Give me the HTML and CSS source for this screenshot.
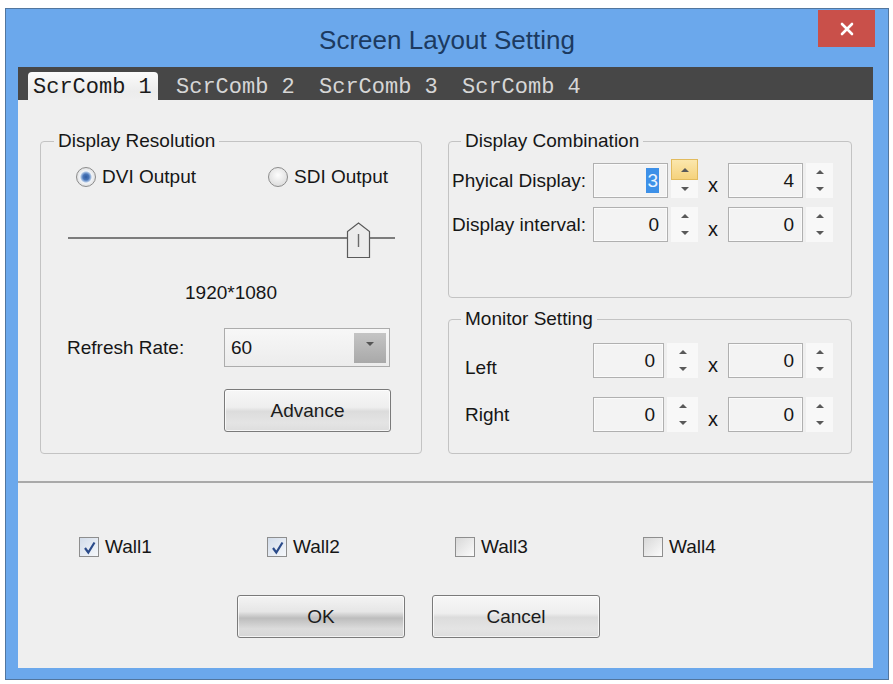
FILE: index.html
```html
<!DOCTYPE html>
<html lang="en">
<head>
    <meta charset="UTF-8">
    <title>Screen Layout Setting</title>
    <link rel="stylesheet" href="styles.css">
</head>
<body>
    <div class="window">
        <div class="titlebar">
            <span></span>
            <div class="title">Screen Layout Setting</div>
            <button class="close">
                <svg width="14" height="14" viewBox="0 0 14 14">
                    <path d="M2 2 L12 12 M12 2 L2 12" stroke="#fff" stroke-width="2.6" stroke-linecap="round"/>
                </svg>
            </button>
        </div>

        <div class="client">
            <div class="tabs">
                <div class="tab active">ScrComb 1</div>
                <div class="tab">ScrComb 2</div>
                <div class="tab">ScrComb 3</div>
                <div class="tab">ScrComb 4</div>
            </div>

            <div class="page">
                <!-- Resolucion de salida -->
                <fieldset class="group res">
                    <legend>Display Resolution</legend>
                    <div class="radios">
                        <label class="radio checked"><span class="dot"></span>DVI Output</label>
                        <label class="radio"><span class="dot"></span>SDI Output</label>
                    </div>
                    <svg class="slider" width="327" height="36" viewBox="0 0 327 36">
                        <line x1="0" y1="16" x2="327" y2="16" stroke="#7c7c7c" stroke-width="2"/>
                        <path d="M279.5 35.5 V9.5 L290.5 1 L301.5 9.5 V35.5 Z" fill="#ececec" stroke="#5a5a5a" stroke-width="1.2"/>
                        <line x1="290.5" y1="12" x2="290.5" y2="25" stroke="#6a6a6a" stroke-width="1.4"/>
                    </svg>
                    <div class="resolution">1920*1080</div>
                    <div class="rate-row">
                        <span class="lbl">Refresh Rate:</span>
                        <div class="combo">
                            <span>60</span>
                            <span class="drop"><span class="tri-down"></span></span>
                        </div>
                    </div>
                    <button class="btn advance">Advance</button>
                </fieldset>

                <div class="right-col">
                    <!-- Combinacion de pantallas -->
                    <fieldset class="group comb">
                        <legend>Display Combination</legend>
                        <div class="spin-grid">
                            <span class="lbl">Phyical Display:</span>
                            <div class="num"><span class="sel">3</span></div>
                            <div class="spin"><span class="up hot"><i></i></span><span class="down"><i></i></span></div>
                            <span class="times">x</span>
                            <div class="num">4</div>
                            <div class="spin"><span class="up"><i></i></span><span class="down"><i></i></span></div>

                            <span class="lbl">Display interval:</span>
                            <div class="num">0</div>
                            <div class="spin"><span class="up"><i></i></span><span class="down"><i></i></span></div>
                            <span class="times">x</span>
                            <div class="num">0</div>
                            <div class="spin"><span class="up"><i></i></span><span class="down"><i></i></span></div>
                        </div>
                    </fieldset>

                    <!-- Ajuste de monitor -->
                    <fieldset class="group mon">
                        <legend>Monitor Setting</legend>
                        <div class="spin-grid monitor">
                            <span class="lbl low">Left</span>
                            <div class="num">0</div>
                            <div class="spin"><span class="up"><i></i></span><span class="down"><i></i></span></div>
                            <span class="times">x</span>
                            <div class="num">0</div>
                            <div class="spin"><span class="up"><i></i></span><span class="down"><i></i></span></div>

                            <span class="lbl">Right</span>
                            <div class="num">0</div>
                            <div class="spin"><span class="up"><i></i></span><span class="down"><i></i></span></div>
                            <span class="times">x</span>
                            <div class="num">0</div>
                            <div class="spin"><span class="up"><i></i></span><span class="down"><i></i></span></div>
                        </div>
                    </fieldset>
                </div>
            </div>

            <div class="footer">
                <div class="walls">
                    <label class="check checked"><span class="box"><svg width="17" height="17" viewBox="0 0 17 17"><path d="M4 9 L7.3 13.5 L13.5 3.5" fill="none" stroke="#2b4b8a" stroke-width="2.2"/></svg></span>Wall1</label>
                    <label class="check checked"><span class="box"><svg width="17" height="17" viewBox="0 0 17 17"><path d="M4 9 L7.3 13.5 L13.5 3.5" fill="none" stroke="#2b4b8a" stroke-width="2.2"/></svg></span>Wall2</label>
                    <label class="check"><span class="box"></span>Wall3</label>
                    <label class="check"><span class="box"></span>Wall4</label>
                </div>
                <div class="actions">
                    <button class="btn default">OK</button>
                    <button class="btn">Cancel</button>
                </div>
            </div>
        </div>
    </div>
</body>
</html>
```

FILE: styles.css
```css
body {
    margin: 0;
    background-color: #fff;
    font-family: "Liberation Sans", Arial, sans-serif;
    font-size: 19px;
    line-height: 22px;
    color: #161616;
}
.window {
    margin: 8px 0 0 5px;
    width: 884px;
    height: 672px;
    box-sizing: border-box;
    border: 1px solid #52769e;
    background-color: #6ba8ec;
    display: flex;
    flex-direction: column;
}
.titlebar {
    height: 58px;
    display: grid;
    grid-template-columns: 1fr auto 1fr;
}
.title {
    align-self: center;
    padding-top: 4px;
    font-size: 26px;
    line-height: 30px;
    color: #1c3a60;
}
.close {
    justify-self: end;
    align-self: start;
    margin: 1px 13px 0 0;
    width: 57px;
    height: 37px;
    border: none;
    padding: 0;
    background-color: #c9504a;
    display: flex;
    align-items: center;
    justify-content: center;
}
.client {
    margin: 0 15px 11px 12px;
    flex: 1;
    background-color: #efefef;
    display: flex;
    flex-direction: column;
}

/* pestañas */
.tabs {
    height: 33px;
    background-color: #474747;
    display: flex;
    align-items: flex-end;
    gap: 13px;
    padding-left: 10px;
}
.tab {
    width: 130px;
    height: 28px;
    box-sizing: border-box;
    padding: 5px 0 0 5px;
    font-family: "Liberation Mono", "Courier New", monospace;
    font-size: 22px;
    line-height: 22px;
    color: #d6d6d6;
    white-space: nowrap;
}
.tab.active {
    color: #1a1a1a;
    border-radius: 4px 4px 0 0;
    background: linear-gradient(#fbfbfb, #ececec 70%, #efefef);
}

.page {
    height: 381px;
    box-sizing: border-box;
    padding: 30px 21px 0 22px;
    display: flex;
    gap: 26px;
}
.group {
    margin: 0;
    padding: 0;
    box-sizing: border-box;
    border: 1px solid #c3c3c3;
    border-radius: 4px;
    min-width: 0;
}
.group legend {
    padding: 0 4px;
    margin-left: 12px;
    line-height: 22px;
}
.res {
    width: 382px;
    height: 324px;
}
.res legend {
    margin-left: 13px;
}
.radios {
    margin: 13px 0 0 35px;
    display: grid;
    grid-template-columns: 192px auto;
    height: 24px;
    align-items: center;
}
.radio {
    display: flex;
    align-items: center;
    gap: 6px;
    white-space: nowrap;
}
.dot {
    width: 20px;
    height: 20px;
    box-sizing: border-box;
    border-radius: 50%;
    border: 1px solid #8c8c8c;
    background: radial-gradient(circle at 50% 40%, #fdfdfd, #dedede 75%);
}
.radio.checked .dot {
    background: radial-gradient(circle, #2f5b9f 0, #4a76b9 3px, #a9c2e3 5px, #f2f4f7 6px, #dcdcdc 10px);
}
.slider {
    display: block;
    margin: 33px 0 0 27px;
}
.resolution {
    margin-top: 24px;
    text-align: center;
}
.rate-row {
    margin-top: 24px;
    padding-left: 26px;
    display: flex;
    align-items: center;
}
.rate-row .lbl {
    width: 157px;
}
.combo {
    width: 166px;
    height: 39px;
    box-sizing: border-box;
    border: 1px solid #acacac;
    background: linear-gradient(#f7f7f7, #ececec);
    display: flex;
    align-items: center;
    padding-left: 6px;
}
.drop {
    margin: 0 3px 0 auto;
    width: 32px;
    height: 30px;
    background: linear-gradient(#c4c4c4, #a9a9a9);
    display: flex;
    justify-content: center;
    padding-top: 9px;
    box-sizing: border-box;
}
.tri-down {
    width: 0;
    height: 0;
    border-left: 4px solid transparent;
    border-right: 4px solid transparent;
    border-top: 4px solid #555;
}

/* botones */
.btn {
    font-family: inherit;
    font-size: 19px;
    color: #1b1b1b;
    width: 168px;
    height: 43px;
    padding: 0;
    border: 1px solid #7a7a7a;
    border-radius: 3px;
    background: linear-gradient(#f7f7f7, #eeeeee 42%, #dcdcdc 52%, #e4e4e4 80%, #dddddd);
    box-shadow: inset 0 0 0 1px rgba(255, 255, 255, 0.7);
}
.btn.default {
    background: linear-gradient(#f4f4f4, #e6e6e6 38%, #bdbdbd 54%, #dcdcdc 80%, #d6d6d6);
}
.advance {
    display: block;
    width: 167px;
    margin: 22px 0 0 183px;
}

.right-col {
    width: 404px;
    display: flex;
    flex-direction: column;
    gap: 10px;
}
.comb {
    height: 168px;
}
.mon {
    height: 146px;
}
.spin-grid {
    margin: 11px 0 0 3px;
    display: grid;
    grid-template-columns: 141px 75px 30px 30px 75px 30px;
    grid-auto-rows: 35px;
    row-gap: 9px;
    align-items: center;
}
.spin-grid.monitor {
    margin: 13px 0 0 16px;
    grid-template-columns: 128px 71px 34px 30px 75px 30px;
    row-gap: 19px;
}
.spin-grid .lbl {
    white-space: nowrap;
}
.spin-grid .lbl.low {
    padding-top: 14px;
}
.num {
    height: 35px;
    box-sizing: border-box;
    border: 1px solid #b0b0b0;
    background-color: #f3f3f3;
    box-shadow: inset 0 0 0 1px #fafafa;
    text-align: right;
    padding-right: 8px;
    line-height: 33px;
}
.sel {
    background-color: #3d90e8;
    color: #eaf3ff;
    padding: 2px 1px;
}
.times {
    text-align: center;
    padding-top: 8px;
    font-size: 20px;
}
.spin {
    height: 35px;
    margin-left: 3px;
    display: flex;
    flex-direction: column;
}
.spin span {
    flex: 1;
    display: flex;
    justify-content: center;
    align-items: center;
    background-color: #f8f8f8;
}
.spin .up i, .spin .down i {
    width: 0;
    height: 0;
    border-left: 4px solid transparent;
    border-right: 4px solid transparent;
}
.spin .up i {
    border-bottom: 4px solid #595959;
}
.spin .down i {
    border-top: 4px solid #595959;
}
.spin .up.hot {
    margin-top: -4px;
    flex: 0 0 21px;
    box-sizing: border-box;
    border: 1px solid #e2bb5e;
    background: linear-gradient(#fbe7ad, #f5d27c);
}

/* parte inferior */
.footer {
    flex: 1;
    border-top: 2px solid #a9a9a9;
}
.walls {
    margin: 53px 0 0 61px;
    display: grid;
    grid-template-columns: repeat(4, 188px);
}
.check {
    display: flex;
    align-items: center;
    gap: 6px;
}
.box {
    width: 20px;
    height: 20px;
    box-sizing: border-box;
    border: 1px solid #8e8e8e;
    background: linear-gradient(135deg, #d8d8d8, #fbfbfb);
    display: flex;
    align-items: center;
    justify-content: center;
}
.check.checked .box {
    background: linear-gradient(135deg, #d2dcea, #f6f8fb);
}
.actions {
    margin: 37px 0 0 219px;
    display: flex;
    gap: 27px;
}
```
